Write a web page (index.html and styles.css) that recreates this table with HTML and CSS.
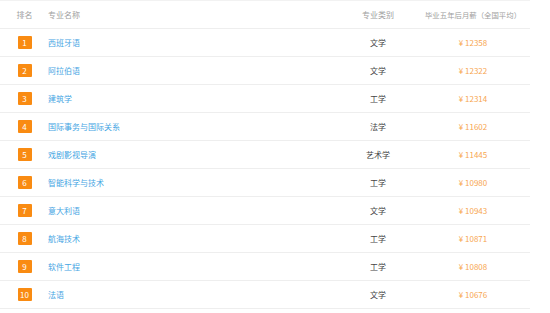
FILE: index.html
```html
<!DOCTYPE html>
<html lang="zh-CN">
<head>
<meta charset="utf-8">
<link rel="stylesheet" href="styles.css">
</head>
<body>
<div class="table">
  <div class="row head">
    <div class="c-rank">排名</div>
    <div class="c-name">专业名称</div>
    <div class="c-cat">专业类别</div>
    <div class="c-sal sal-head">毕业五年后月薪（全国平均）</div>
  </div>
  <div class="row"><div class="c-rank"><span class="badge">1</span></div><div class="c-name link">西班牙语</div><div class="c-cat">文学</div><div class="c-sal money">¥ 12358</div></div>
  <div class="row"><div class="c-rank"><span class="badge">2</span></div><div class="c-name link">阿拉伯语</div><div class="c-cat">文学</div><div class="c-sal money">¥ 12322</div></div>
  <div class="row"><div class="c-rank"><span class="badge">3</span></div><div class="c-name link">建筑学</div><div class="c-cat">工学</div><div class="c-sal money">¥ 12314</div></div>
  <div class="row"><div class="c-rank"><span class="badge">4</span></div><div class="c-name link">国际事务与国际关系</div><div class="c-cat">法学</div><div class="c-sal money">¥ 11602</div></div>
  <div class="row"><div class="c-rank"><span class="badge">5</span></div><div class="c-name link">戏剧影视导演</div><div class="c-cat">艺术学</div><div class="c-sal money">¥ 11445</div></div>
  <div class="row"><div class="c-rank"><span class="badge">6</span></div><div class="c-name link">智能科学与技术</div><div class="c-cat">工学</div><div class="c-sal money">¥ 10980</div></div>
  <div class="row"><div class="c-rank"><span class="badge">7</span></div><div class="c-name link">意大利语</div><div class="c-cat">文学</div><div class="c-sal money">¥ 10943</div></div>
  <div class="row"><div class="c-rank"><span class="badge">8</span></div><div class="c-name link">航海技术</div><div class="c-cat">工学</div><div class="c-sal money">¥ 10871</div></div>
  <div class="row"><div class="c-rank"><span class="badge">9</span></div><div class="c-name link">软件工程</div><div class="c-cat">工学</div><div class="c-sal money">¥ 10808</div></div>
  <div class="row"><div class="c-rank"><span class="badge">10</span></div><div class="c-name link">法语</div><div class="c-cat">文学</div><div class="c-sal money">¥ 10676</div></div>
</div>
</body>
</html>
```
FILE: styles.css
```css
html, body {
  margin: 0;
  padding: 0;
  background: #fff;
}
body {
  font-family: "Noto Sans CJK SC", "Noto Sans", sans-serif;
  font-size: 8px;
  color: #444;
}
.table {
  width: 530px;
  border-top: 1px solid #f2f2f2;
}
.row {
  display: grid;
  grid-template-columns: 48px 292px 76px 114px;
  align-items: center;
  height: 27px;
  border-bottom: 1px solid #eeeeee;
}
.head {
  height: 27px;
  color: #a0a0a0;
}
.c-rank {
  text-align: center;
  display: flex;
  justify-content: center;
  padding-left: 1px;
}
.c-cat, .c-sal {
  text-align: center;
}
.sal-head {
  font-size: 7.4px;
}
.link {
  color: #45a5e3;
}
.money {
  color: #f7a650;
}
.badge {
  display: flex;
  align-items: center;
  justify-content: center;
  width: 14px;
  height: 13px;
  background: #f98b12;
  color: #fff;
  font-size: 8px;
  border-radius: 1px;
}
```
